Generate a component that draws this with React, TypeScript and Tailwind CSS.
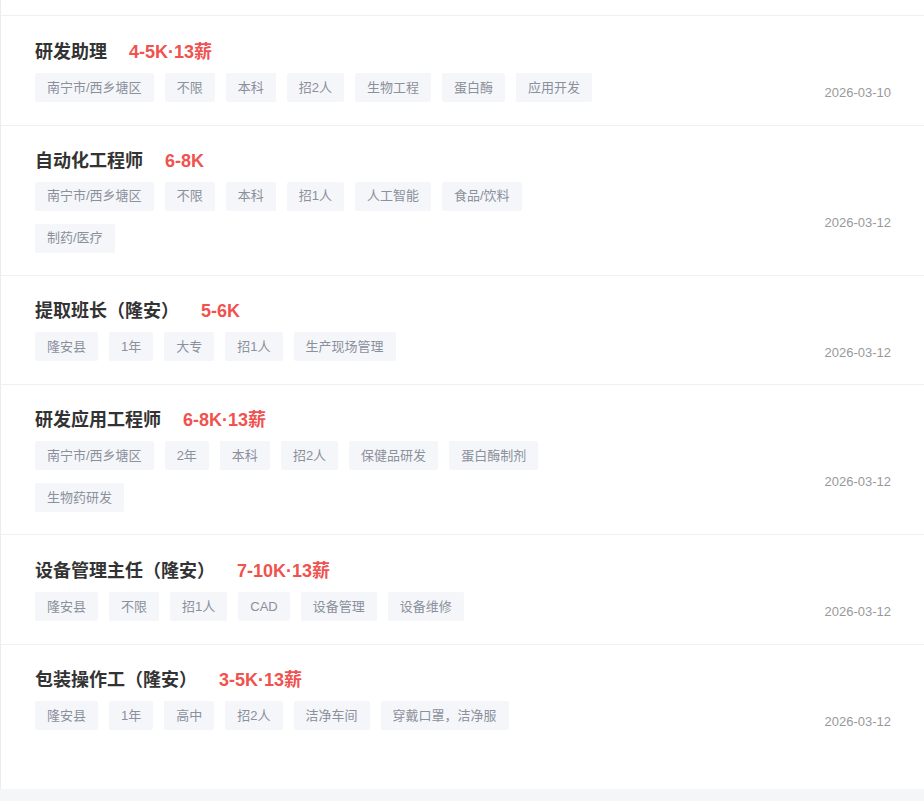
const jobs = [
  {
    title: "研发助理",
    salary: "4-5K·13薪",
    tags: ["南宁市/西乡塘区", "不限", "本科", "招2人", "生物工程", "蛋白酶", "应用开发"],
    date: "2026-03-10",
  },
  {
    title: "自动化工程师",
    salary: "6-8K",
    tags: ["南宁市/西乡塘区", "不限", "本科", "招1人", "人工智能", "食品/饮料", "制药/医疗"],
    date: "2026-03-12",
  },
  {
    title: "提取班长（隆安）",
    salary: "5-6K",
    tags: ["隆安县", "1年", "大专", "招1人", "生产现场管理"],
    date: "2026-03-12",
  },
  {
    title: "研发应用工程师",
    salary: "6-8K·13薪",
    tags: ["南宁市/西乡塘区", "2年", "本科", "招2人", "保健品研发", "蛋白酶制剂", "生物药研发"],
    date: "2026-03-12",
  },
  {
    title: "设备管理主任（隆安）",
    salary: "7-10K·13薪",
    tags: ["隆安县", "不限", "招1人", "CAD", "设备管理", "设备维修"],
    date: "2026-03-12",
  },
  {
    title: "包装操作工（隆安）",
    salary: "3-5K·13薪",
    tags: ["隆安县", "1年", "高中", "招2人", "洁净车间", "穿戴口罩，洁净服"],
    date: "2026-03-12",
  },
];

export default function App() {
  return (
    <div
      className="min-h-screen bg-[#f4f6f8]"
      style={{ fontFamily: '"Liberation Sans", "Noto Sans CJK SC", sans-serif' }}
    >
      <div className="border-l border-[#ececec] bg-white pb-[36px]">
        {/* tail of the previous item */}
        <div className="h-[16px] border-b border-[#f0f0f0]" />
        {jobs.map((job, i) => (
          <JobRow key={i} {...job} last={i === jobs.length - 1} />
        ))}
      </div>
      <div className="h-[12px]" />
    </div>
  );
}

function JobRow({
  title,
  salary,
  tags,
  date,
  last,
}: {
  title: string;
  salary: string;
  tags: string[];
  date: string;
  last: boolean;
}) {
  return (
    <div className={`flex items-center pl-[34px] pr-[33px] pt-[23px] pb-[22px] ${last ? "" : "border-b border-[#f0f0f0]"}`}>
      <div className="flex-1">
        <div className="flex h-6 items-center">
          <span className="text-[18px] font-bold leading-6 text-[#333]">{title}</span>
          <span className="ml-[22px] text-[18px] font-bold leading-6 text-[#f0524f]">{salary}</span>
        </div>
        <div className="mt-[9px] flex max-w-[565px] flex-wrap gap-x-[11px] gap-y-[13px]">
          {tags.map((t) => (
            <span
              key={t}
              className="flex h-[29px] items-center rounded-[2px] bg-[#f5f6f9] px-3 text-[13px] text-[#8a909c]"
            >
              {t}
            </span>
          ))}
        </div>
      </div>
      <div className="mt-[44px] text-[13px] text-[#999]">{date}</div>
    </div>
  );
}
